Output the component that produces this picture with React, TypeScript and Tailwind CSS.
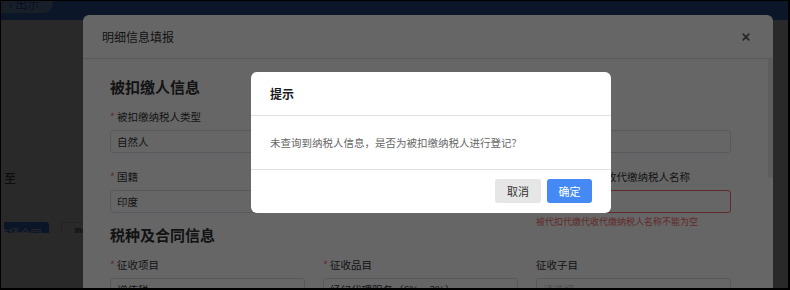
import React from "react";

const cjk = "font-['Noto_Sans_CJK_SC','Liberation_Sans',sans-serif]";

type Field = {
  label: string;
  required?: boolean;
  value?: string;
  placeholder?: string;
  error?: string;
};

const firstRows: Field[] = [
  { label: "被扣缴纳税人类型", required: true, value: "自然人" },
  { label: "证件号码", required: true, value: "" },
  { label: "证件类型", required: true, placeholder: "" },
  { label: "国籍", required: true, value: "印度" },
  { label: "姓名", required: true, value: "" },
  {
    label: "被代扣代缴代收代缴纳税人名称",
    required: true,
    value: "",
    error: "被代扣代缴代收代缴纳税人名称不能为空",
  },
];

const secondRows: Field[] = [
  { label: "征收项目", required: true, value: "增值税" },
  { label: "征收品目", required: true, value: "经纪代理服务（6%、3%）" },
  { label: "征收子目", placeholder: "请选择" },
];

const FormItem: React.FC<{ field: Field }> = ({ field }) => (
  <div className="relative">
    <div className="mb-[6px] flex h-[14px] items-center text-[10.5px] leading-[14px] text-[#333]">
      {field.required && <span className="mr-[2px] text-[#f56c6c]">*</span>}
      {field.label}
    </div>
    <div
      className={`flex h-[23px] items-center rounded-[3px] border px-[6px] text-[10.5px] ${
        field.error ? "border-[#f56c6c]" : "border-[#dcdfe6]"
      }`}
    >
      {field.value ? (
        <span className="text-[#333]">{field.value}</span>
      ) : (
        <span className="text-[#c0c4cc]">{field.placeholder}</span>
      )}
    </div>
    {field.error && (
      <div className="absolute left-0 top-[calc(100%+3px)] whitespace-nowrap text-[9px] leading-[12px] text-[#f56c6c]">
        {field.error}
      </div>
    )}
  </div>
);

const Section: React.FC<{ title: string; fields: Field[]; className?: string }> = ({
  title,
  fields,
  className = "",
}) => (
  <div className={className}>
    <h2 className="mb-[13px] text-[15px] font-bold leading-[20px] text-[#303133]">{title}</h2>
    <div className="grid grid-cols-[195px_195px_195px] gap-x-[18px] gap-y-[17px]">
      {fields.map((f) => (
        <FormItem key={f.label} field={f} />
      ))}
    </div>
  </div>
);

export default function App() {
  return (
    <div
      className={`relative h-[290px] w-[790px] overflow-hidden border-b-2 border-l border-r-2 border-t border-black bg-white ${cjk}`}
    >
      {/* page behind the dialogs */}
      <div className="relative h-[19px] bg-[#4a89ff]">
        <div className="absolute -top-[6px] left-0 flex h-[18px] w-[52px] items-center rounded-br-[9px] bg-[#9fc2ff] pl-[8px] text-[12px] text-[#2f63c8]">
          ‹ 出示
        </div>
      </div>
      <div className="pl-[3px] pt-[150px]">
        <div className="text-[12px] leading-[16px] text-[#333]">至</div>
        <div className="mt-[36px] flex h-[11px] gap-[12px] overflow-hidden">
          <div className="-ml-[14px] flex h-[22px] w-[59px] shrink-0 items-center justify-center rounded-[3px] bg-[#4589f4] text-[11px] text-white">
            选择合同
          </div>
          <div className="flex h-[22px] w-[60px] shrink-0 items-center rounded-[3px] border border-[#dcdfe6] pl-[12px] text-[11px] text-[#333]">
            删除
          </div>
        </div>
      </div>

      <div className="absolute inset-0 bg-black/60" />

      {/* detail modal */}
      <div className="absolute left-[82px] top-[14px] h-[300px] w-[690px] rounded-t-[6px] bg-white">
        <div className="flex h-[44px] items-center justify-between border-b border-[#dedede] pl-[19px] pr-[23px]">
          <span className="text-[12px] text-[#333]">明细信息填报</span>
          <svg width="8" height="8" viewBox="0 0 8 8" className="text-[#606266]">
            <path d="M1.2 1.2L6.8 6.8M6.8 1.2L1.2 6.8" stroke="currentColor" strokeWidth="1.7" strokeLinecap="round" />
          </svg>
        </div>
        <div className="relative pl-[27px] pt-[18px]">
          <div className="absolute right-0 top-0 h-[119px] w-[5px] bg-[#ececec]" />
          <Section title="被扣缴人信息" fields={firstRows} />
          <Section title="税种及合同信息" fields={secondRows} className="mt-[12px]" />
        </div>
      </div>

      <div className="absolute inset-0 bg-black/60" />

      {/* confirm dialog */}
      <div className="absolute left-[250px] top-[71px] h-[141px] w-[360px] rounded-[6px] bg-white">
        <div className="flex h-[44px] items-center border-b border-[#e0e0e0] pl-[19px] text-[12px] font-bold text-[#1a1a1a]">
          提示
        </div>
        <div className="flex h-[54px] items-center border-b border-[#e0e0e0] pl-[19px] text-[10.5px] text-[#666]">
          未查询到纳税人信息，是否为被扣缴纳税人进行登记?
        </div>
        <div className="flex justify-end gap-[6px] pr-[19px] pt-[9px]">
          <button className="h-[24px] w-[46px] rounded-[3px] bg-[#e6e6e6] text-[11px] text-[#333]">取消</button>
          <button className="h-[24px] w-[45px] rounded-[3px] bg-[#4589f4] text-[11px] text-white">确定</button>
        </div>
      </div>
    </div>
  );
}
